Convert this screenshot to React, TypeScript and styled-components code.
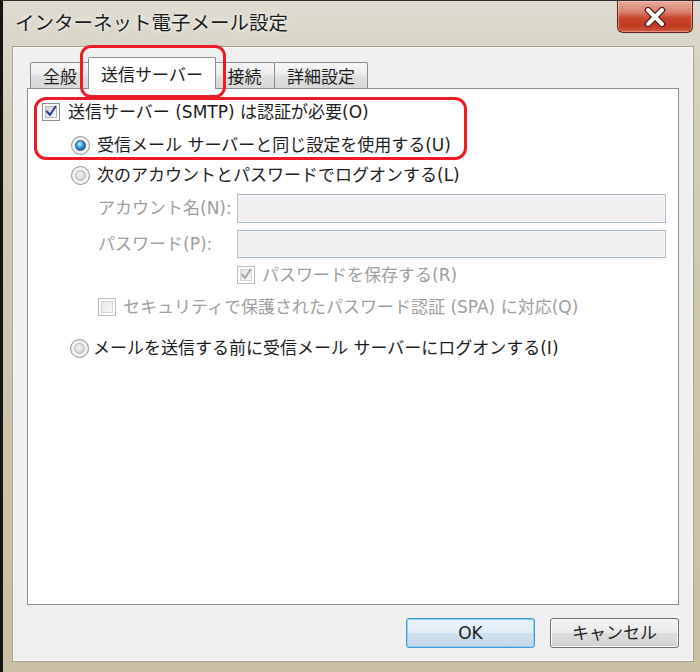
import React from "react";
import styled, { createGlobalStyle, css } from "styled-components";

const FONT = `"DejaVu Sans", "Noto Sans CJK JP", sans-serif`;
const CJK = `"Noto Sans CJK JP", sans-serif`;

const Global = createGlobalStyle`
  html, body { margin: 0; padding: 0; background: #ffffff; }
  body { width: 700px; height: 672px; overflow: hidden; }
  * { box-sizing: border-box; }
`;

const Screen = styled.div`
  position: relative;
  width: 700px;
  height: 672px;
  display: flex;
  flex-direction: column;
  border-left: 3px solid #141414;
  border-top: 1px solid #2e2e2e;
  background: linear-gradient(
    180deg,
    #dedbd1 0%,
    #d9d5c7 7%,
    #d2ccb9 20%,
    #cdc5ab 60%,
    #c9bfa3 100%
  );
  font-family: ${FONT};
  color: #1c1c1c;
`;

const TitleBar = styled.div`
  height: 46px;
  flex: none;
  display: flex;
  justify-content: space-between;
  align-items: flex-start;
`;

const Title = styled.div`
  margin: 8px 0 0 12px;
  font-family: ${CJK};
  font-size: 19.5px;
  line-height: 1.3;
  color: #1a1a1a;
  text-shadow: 0 0 6px rgba(255, 255, 255, 0.9), 0 0 2px rgba(255, 255, 255, 0.9);
`;

const CloseButton = styled.div`
  width: 76px;
  height: 32px;
  margin-right: 7px;
  border: 1px solid #5e2218;
  border-top: none;
  border-radius: 0 0 6px 6px;
  background: linear-gradient(
    180deg,
    #e6ab9c 0%,
    #d9846f 35%,
    #c9452b 55%,
    #c23a22 80%,
    #cf5a3c 100%
  );
  box-shadow: inset 0 0 0 1px rgba(255, 220, 210, 0.45);
  display: flex;
  align-items: center;
  justify-content: center;
`;

const Client = styled.div`
  flex: 1;
  margin: 0 7px 11px 10px;
  background: #f0f0f0;
  border: 1px solid #fbfaf6;
  box-shadow: 0 0 0 1px #a89f84;
  display: flex;
  flex-direction: column;
  padding: 9px 13px 12px 13px;
`;

const TabStrip = styled.div`
  height: 31px;
  flex: none;
  display: flex;
  align-items: flex-end;
  padding-left: 3px;
  position: relative;
  z-index: 1;
`;

const Tab = styled.div<{ $active?: boolean; $w: number; $ml?: number }>`
  width: ${(p) => p.$w}px;
  height: 26px;
  margin-left: ${(p) => p.$ml ?? 0}px;
  border: 1px solid #898c95;
  border-bottom: none;
  border-radius: 2px 2px 0 0;
  background: linear-gradient(180deg, #f8f8f8 0%, #ececec 45%, #dedede 55%, #d9d9d9 100%);
  font-family: ${CJK};
  font-size: 17px;
  line-height: 1;
  color: #1c1c1c;
  display: flex;
  align-items: center;
  justify-content: center;
  position: relative;
  ${(p) =>
    p.$active &&
    css`
      height: 32px;
      margin-bottom: -1px;
      margin-right: -2px;
      background: #ffffff;
      z-index: 2;
      padding-bottom: 1px;
    `}
`;

const Panel = styled.div`
  flex: 1;
  background: #ffffff;
  border: 1px solid #898c95;
  padding: 8px 0 0 14px;
  display: flex;
  flex-direction: column;
`;

const Row = styled.div<{ $mt?: number; $indent?: number; $gap?: number }>`
  height: 30px;
  flex: none;
  display: flex;
  align-items: center;
  margin-top: ${(p) => p.$mt ?? 0}px;
  padding-left: ${(p) => p.$indent ?? 0}px;
  gap: ${(p) => p.$gap ?? 7}px;
`;

const Label = styled.span<{ $disabled?: boolean }>`
  font-size: 17px;
  line-height: 1;
  white-space: nowrap;
  color: ${(p) => (p.$disabled ? "#9e9e9e" : "#1c1c1c")};
`;

const FieldLabel = styled(Label)`
  width: 139px;
  flex: none;
`;

const TextBox = styled.div<{ $h: number }>`
  flex: 1;
  height: ${(p) => p.$h}px;
  margin-right: 12px;
  background: #f0f0f0;
  border: 1px solid #a9bacb;
  box-shadow: inset 0 0 0 1px #f7f7f7;
`;

const CheckBoxBox = styled.span<{ $disabled?: boolean }>`
  width: 18px;
  height: 18px;
  flex: none;
  border: 1px solid ${(p) => (p.$disabled ? "#bcbcbc" : "#8e8f8f")};
  background: #ffffff;
  padding: 2px;
  display: flex;
`;

const CheckInner = styled.span<{ $disabled?: boolean }>`
  flex: 1;
  border: 1px solid ${(p) => (p.$disabled ? "#d6d6d6" : "#b8b8b8")};
  background: ${(p) =>
    p.$disabled
      ? "linear-gradient(135deg, #e6e6e6 0%, #f4f4f4 70%, #fafafa 100%)"
      : "linear-gradient(135deg, #d2d2d2 0%, #ececec 60%, #f8f8f8 100%)"};
  position: relative;
  display: flex;
  align-items: center;
  justify-content: center;
  overflow: visible;
`;

const CheckMark = styled.svg`
  position: absolute;
  left: -2px;
  top: -3px;
  width: 14px;
  height: 14px;
  overflow: visible;
`;

const RadioOuter = styled.span`
  width: 19px;
  height: 19px;
  flex: none;
  border-radius: 50%;
  border: 1px solid #8c959c;
  background: radial-gradient(circle at 50% 50%, #ffffff 0%, #f4f4f4 55%, #d8d8d8 100%);
  display: flex;
  align-items: center;
  justify-content: center;
`;

const RadioInner = styled.span<{ $checked?: boolean }>`
  width: 11px;
  height: 11px;
  border-radius: 50%;
  background: ${(p) =>
    p.$checked
      ? "radial-gradient(circle at 40% 35%, #d4f3ff 0%, #5ab8ef 30%, #1a73bd 65%, #0b3d72 100%)"
      : "radial-gradient(circle at 40% 35%, #f2f2f2 0%, #dcdcdc 55%, #c4c4c4 100%)"};
  border: 1px solid ${(p) => (p.$checked ? "#264f78" : "#b5b5b5")};
`;

const ButtonRow = styled.div`
  flex: none;
  height: 30px;
  margin-top: 13px;
  display: flex;
  justify-content: flex-end;
  gap: 15px;
`;

const Button = styled.div<{ $default?: boolean }>`
  width: 129px;
  height: 30px;
  border-radius: 3px;
  border: 1px solid ${(p) => (p.$default ? "#3c9bd6" : "#707070")};
  background: ${(p) =>
    p.$default
      ? "linear-gradient(180deg, #eaf3fa 0%, #e0ecf6 48%, #cfe1ef 52%, #c5d9ea 100%)"
      : "linear-gradient(180deg, #f4f4f4 0%, #ebebeb 48%, #dddddd 52%, #d1d1d1 100%)"};
  box-shadow: inset 0 0 0 1px ${(p) => (p.$default ? "#8fd3f6" : "#fbfbfb")};
  font-size: 17px;
  line-height: 1;
  color: #1c1c1c;
  display: flex;
  align-items: center;
  justify-content: center;
`;

const Highlight = styled.div<{ $x: number; $y: number; $w: number; $h: number; $r: number }>`
  position: absolute;
  left: ${(p) => p.$x}px;
  top: ${(p) => p.$y}px;
  width: ${(p) => p.$w}px;
  height: ${(p) => p.$h}px;
  border: 3px solid #ec1c24;
  border-radius: ${(p) => p.$r}px;
  pointer-events: none;
  z-index: 10;
`;

function CheckBox({ checked, disabled }: { checked?: boolean; disabled?: boolean }) {
  return (
    <CheckBoxBox $disabled={disabled}>
      <CheckInner $disabled={disabled}>
        {checked && (
          <CheckMark viewBox="0 0 14 14">
            <path
              d="M3 7.5 L6 11 L11.5 2.5"
              fill="none"
              stroke={disabled ? "#a6a6a6" : "#2a3f94"}
              strokeWidth={2}
              strokeLinecap="round"
              strokeLinejoin="round"
            />
          </CheckMark>
        )}
      </CheckInner>
    </CheckBoxBox>
  );
}

function Radio({ checked }: { checked?: boolean }) {
  return (
    <RadioOuter>
      <RadioInner $checked={checked} />
    </RadioOuter>
  );
}

export default function App() {
  return (
    <>
      <Global />
      <Screen>
        <TitleBar>
          <Title>インターネット電子メール設定</Title>
          <CloseButton>
            <svg width="24" height="20" viewBox="0 0 24 20">
              <path
                d="M5 3 L19 17 M19 3 L5 17"
                stroke="#4a1a12"
                strokeWidth={6.5}
                strokeLinecap="round"
                fill="none"
              />
              <path
                d="M5 3 L19 17 M19 3 L5 17"
                stroke="#ffffff"
                strokeWidth={4}
                strokeLinecap="round"
                fill="none"
              />
            </svg>
          </CloseButton>
        </TitleBar>
        <Client>
          <TabStrip>
            <Tab $w={60}>全般</Tab>
            <Tab $w={128} $ml={-2} $active>
              送信サーバー
            </Tab>
            <Tab $w={61}>接続</Tab>
            <Tab $w={94} $ml={-1}>
              詳細設定
            </Tab>
          </TabStrip>
          <Panel>
            <Row $gap={8}>
              <CheckBox checked />
              <Label>送信サーバー (SMTP) は認証が必要(O)</Label>
            </Row>
            <Row $mt={3} $indent={29}>
              <Radio checked />
              <Label>受信メール サーバーと同じ設定を使用する(U)</Label>
            </Row>
            <Row $mt={0} $indent={29}>
              <Radio />
              <Label>次のアカウントとパスワードでログオンする(L)</Label>
            </Row>
            <Row $mt={3} $indent={56} $gap={0}>
              <FieldLabel $disabled>アカウント名(N):</FieldLabel>
              <TextBox $h={29} />
            </Row>
            <Row $mt={6} $indent={56} $gap={0}>
              <FieldLabel $disabled>パスワード(P):</FieldLabel>
              <TextBox $h={28} />
            </Row>
            <Row $mt={1} $indent={195}>
              <CheckBox checked disabled />
              <Label $disabled>パスワードを保存する(R)</Label>
            </Row>
            <Row $mt={2} $indent={56}>
              <CheckBox disabled />
              <Label $disabled>セキュリティで保護されたパスワード認証 (SPA) に対応(Q)</Label>
            </Row>
            <Row $mt={11} $indent={28} $gap={4}>
              <Radio />
              <Label>メールを送信する前に受信メール サーバーにログオンする(I)</Label>
            </Row>
          </Panel>
          <ButtonRow>
            <Button $default>OK</Button>
            <Button>キャンセル</Button>
          </ButtonRow>
        </Client>
        <Highlight $x={77} $y={44} $w={146} $h={53} $r={11} />
        <Highlight $x={31} $y={96} $w={433} $h={63} $r={12} />
      </Screen>
    </>
  );
}
